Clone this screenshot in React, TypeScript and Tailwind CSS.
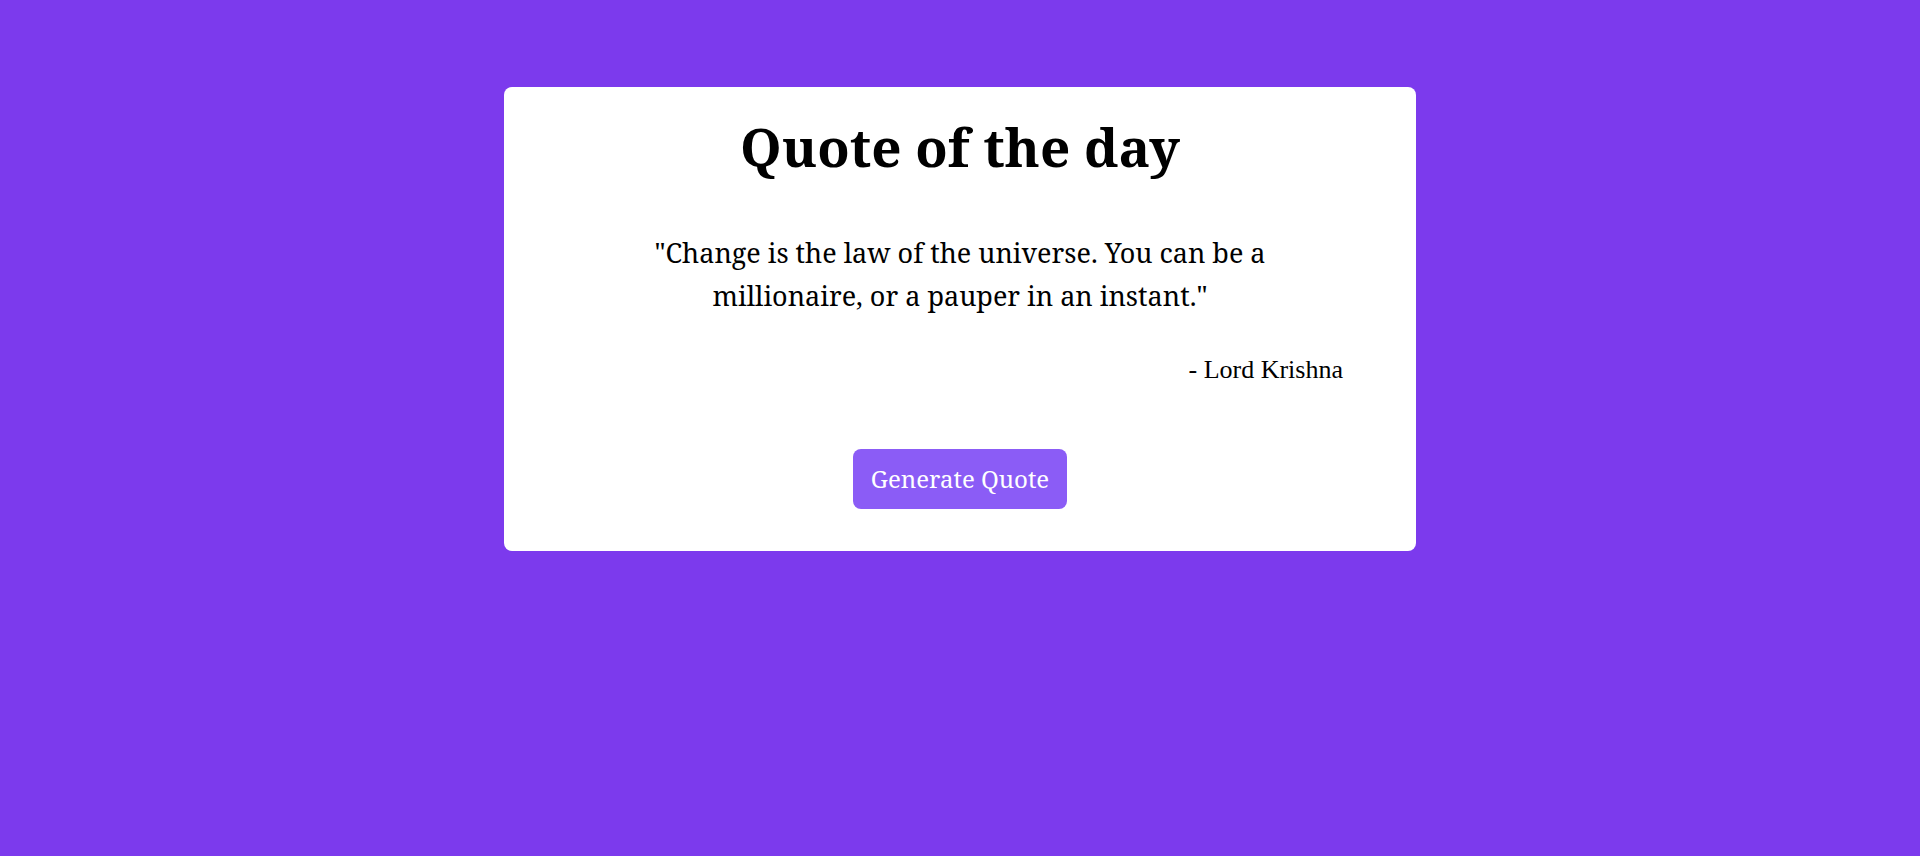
import React from "react";

export default function App() {
  return (
    <div className="min-h-[856px] w-full bg-[#7c3aed] pt-[87px] font-['Noto_Serif',serif]">
      <div className="mx-auto flex w-[912px] flex-col items-center rounded-lg bg-white px-[73px] pb-[42px] pt-[26px]">
        <h1 className="text-[53px] font-bold leading-[1.3] text-black">Quote of the day</h1>
        <p className="mt-[49px] w-[680px] text-center text-[27px] leading-[43px] text-black">
          "Change is the law of the universe. You can be a millionaire, or a pauper in an instant."
        </p>
        <div className="mt-[33px] w-full text-right font-['Liberation_Serif',serif] text-[26px] text-black">
          - Lord Krishna
        </div>
        <button className="mt-[60px] h-[60px] w-[214px] rounded-lg bg-[#8b5cf6] text-[24px] text-white">
          Generate Quote
        </button>
      </div>
    </div>
  );
}
